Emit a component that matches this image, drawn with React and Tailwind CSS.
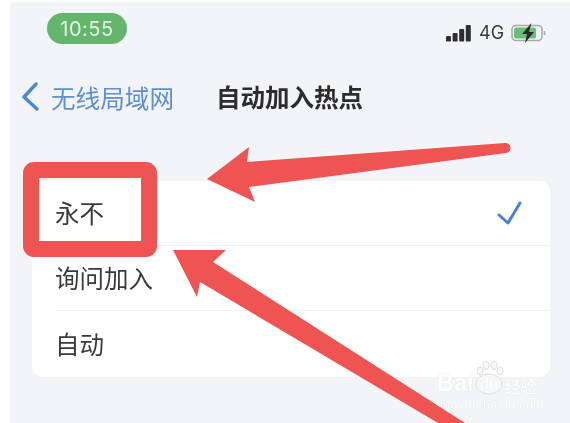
const cjk = { fontFamily: '"Noto Sans CJK SC", "Noto Sans", sans-serif' }

function StatusBar() {
  return (
    <div className="flex items-start justify-between pl-[37px] pr-[24px] pt-[11px] blur-[0.5px]">
      <div className="w-[80px] h-[31px] rounded-full bg-[#63b66c] flex items-center justify-center text-[20px] text-[#e6f4e8] tracking-[0.5px] font-['Inter',sans-serif]">
        10:55
      </div>
      <div className="flex items-center mt-[10px]">
        <svg width="26" height="17" viewBox="0 0 26 17" fill="#2e2e2e">
          <rect x="0" y="11" width="5" height="5.5" rx="1.2" />
          <rect x="6.6" y="8" width="5" height="8.5" rx="1" />
          <rect x="13.2" y="4" width="5" height="12.5" rx="1" />
          <rect x="19.8" y="0" width="5" height="16.5" rx="1" />
        </svg>
        <span className="ml-[7px] w-[24px] text-[18px] leading-none text-[#3a3a3a] font-['Inter',sans-serif]">4G</span>
        <svg className="ml-[8px]" width="35" height="20" viewBox="0 0 35 20">
          <rect x="1" y="2.5" width="30" height="15" rx="4" fill="#f1f3f7" stroke="#a9abab" strokeWidth="1.6" />
          <rect x="3" y="4.5" width="22" height="11" rx="2" fill="#67c076" />
          <path d="M33.5 8v4" stroke="#a9abab" strokeWidth="1.5" />
          <path d="M20.5 0 11 11h5l-2 9 9-11h-5z" fill="#2b2b2b" />
        </svg>
      </div>
    </div>
  )
}

function NavBar() {
  return (
    <div className="flex items-center h-[30px] mt-[38px] blur-[0.4px]" style={cjk}>
      <svg className="ml-[11px]" width="20" height="30" viewBox="0 0 20 30" fill="none" stroke="#4c88da" strokeWidth="3.4" strokeLinecap="round" strokeLinejoin="round">
        <path d="M15 2 3 15l13 12" />
      </svg>
      <span className="ml-[10px] text-[24.6px] leading-none text-[#5b8fd8] whitespace-nowrap">无线局域网</span>
      <span className="ml-[42px] text-[24.5px] leading-none font-semibold text-[#2c2c2c] whitespace-nowrap">自动加入热点</span>
    </div>
  )
}

function Row({ label, checked, last }) {
  return (
    <div className={`flex items-center justify-between ml-[23px] pr-[27px] ${last ? 'h-[66px]' : 'h-[65px] border-b border-[#f0f1f4]'}`}>
      <span className="text-[24.5px] leading-none text-[#3a3a3a] blur-[0.4px]" style={cjk}>{label}</span>
      {checked && (
        <svg width="26" height="24" viewBox="0 0 26 24" fill="none" stroke="#4a80d8" strokeWidth="3" strokeLinecap="round" strokeLinejoin="round" className="blur-[0.3px]">
          <path d="M2 14l9 8L23 2" />
        </svg>
      )}
    </div>
  )
}

function Watermark() {
  return (
    <div className="absolute left-[437px] top-[361px] flex flex-col text-white [text-shadow:0_0_1px_#d5d7db] blur-[0.5px]">
      <div className="flex items-end h-[34px]">
        <span className="text-[23px] leading-none font-bold font-['Liberation_Sans',sans-serif] tracking-[0.3px]">Bai</span>
        <svg width="30" height="34" viewBox="0 0 30 34" fill="#f6f7f9" stroke="#dcdee2" strokeWidth="1">
          <ellipse cx="6" cy="10" rx="3" ry="4" />
          <ellipse cx="12" cy="4.5" rx="3" ry="4" />
          <ellipse cx="20" cy="4.5" rx="3" ry="4" />
          <ellipse cx="26" cy="10" rx="3" ry="4" />
          <ellipse cx="15" cy="23" rx="13" ry="10" />
          <text x="15" y="28" textAnchor="middle" fontSize="15" fontWeight="700" fill="#ffffff" stroke="none" fontFamily="Liberation Sans, sans-serif">du</text>
        </svg>
        <span className="ml-[1px] mb-[1px] text-[16px] leading-none font-medium whitespace-nowrap" style={cjk}>经验</span>
      </div>
      <span className="mt-[4px] text-[12px] leading-none font-['Liberation_Sans',sans-serif] tracking-[0.6px] whitespace-nowrap">jingyan.baidu.com</span>
    </div>
  )
}

export default function App() {
  return (
    <div className="relative w-[570px] h-[423px] overflow-hidden bg-white pl-[10px] pt-[2px]">
      <div className="h-full bg-[#f2f4f7]">
        <StatusBar />
        <NavBar />
        <div className="ml-[22px] mr-[20px] mt-[69px] bg-white rounded-[11px]">
          <Row label="永不" checked />
          <Row label="询问加入" />
          <Row label="自动" last />
        </div>
      </div>

      <Watermark />

      {/* red annotation arrows and box */}
      <svg className="absolute inset-0 blur-[0.3px]" width="570" height="423" viewBox="0 0 570 423" fill="#ee5451">
        <path d="M207 179 249 147 247 162 505 143A5 5 0 0 1 506 153L249 187 255 202Z" />
        <path d="M173 250H226L213 262 465 423H438L200 282 197 297Z" />
      </svg>
      <div className="absolute left-[23px] top-[162px] w-[134px] h-[95px] border-[16px] border-[#ee5451] rounded-[11px] blur-[0.3px]" />
    </div>
  )
}
